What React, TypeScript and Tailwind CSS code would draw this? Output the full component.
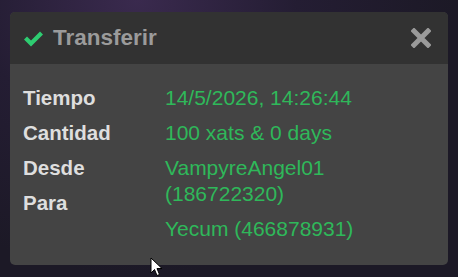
import React from 'react'

interface Row {
  label: string
  value: string
}

const rows: Row[] = [
  { label: 'Tiempo', value: '14/5/2026, 14:26:44' },
  { label: 'Cantidad', value: '100 xats & 0 days' },
  { label: 'Desde', value: 'VampyreAngel01 (186722320)' },
  { label: 'Para', value: 'Yecum (466878931)' },
]

function CheckIcon() {
  return (
    <svg width="21" height="17" viewBox="0 0 21 17" className="shrink-0">
      <path d="M1 9.5 L4 6.5 L8 10.5 L17 1.5 L20 4.5 L8 16.5 Z" fill="#2ecc71" />
    </svg>
  )
}

function CloseIcon() {
  return (
    <svg width="20" height="20" viewBox="0 0 20 20">
      <path d="M3 3 L17 17 M17 3 L3 17" stroke="#9a9a9a" strokeWidth="5" strokeLinecap="square" />
    </svg>
  )
}

function Cursor() {
  return (
    <svg width="14" height="20" viewBox="0 0 14 20" className="absolute left-[150px] top-[257px]">
      <path d="M1 1 L1 16 L4.5 12.5 L7 18.5 L9.5 17.5 L7 11.5 L12 11.5 Z" fill="#fff" stroke="#000" strokeWidth="1" />
    </svg>
  )
}

export default function App() {
  return (
    <div
      className="relative w-[458px] h-[277px] overflow-hidden bg-[#1c1926] pt-[12px] pl-[10px]"
      style={{ fontFamily: '"Liberation Sans", Arial, sans-serif' }}
    >
      <div className="absolute inset-0 bg-[radial-gradient(ellipse_at_30%_0%,#3a2a4e_0%,#241d33_35%,#1c1926_70%)]" />
      <div className="relative w-[438px] h-[253px] rounded-[5px] overflow-hidden bg-[#444444] flex flex-col">
        <div className="h-[52px] bg-[#323232] flex items-center pl-[13px] pr-[17px]">
          <CheckIcon />
          <span className="ml-[9px] text-[22.5px] font-bold text-[#9b9b9b] leading-none">Transferir</span>
          <div className="ml-auto flex items-center">
            <CloseIcon />
          </div>
        </div>
        <div className="flex pt-[21px] pl-[13px] leading-[26px]">
          <div className="w-[142px] flex flex-col gap-[9px] text-[20.5px] font-bold text-[#dedede]">
            {rows.map((r) => (
              <div key={r.label}>{r.label}</div>
            ))}
          </div>
          <div className="w-[235px] flex flex-col gap-[9px] text-[21px] text-[#2fb85a]">
            {rows.map((r) => (
              <div key={r.label}>{r.value}</div>
            ))}
          </div>
        </div>
      </div>
      <Cursor />
    </div>
  )
}
